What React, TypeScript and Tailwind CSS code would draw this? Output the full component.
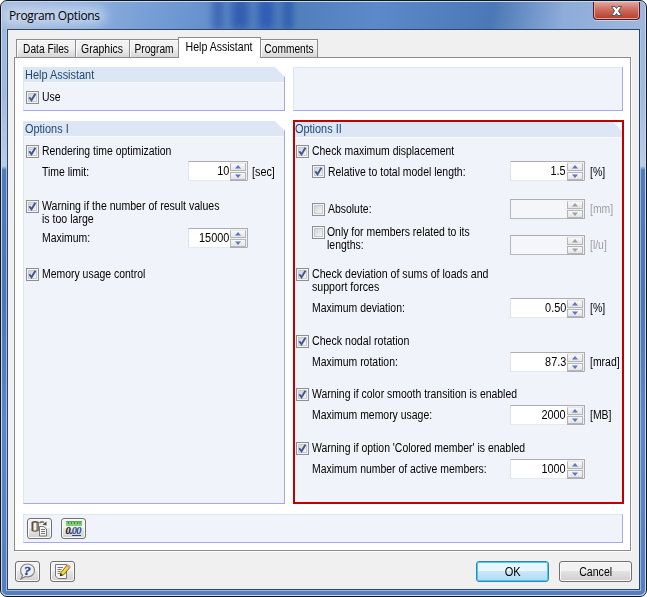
import React from 'react';
import clsx from 'clsx';

// Condensed dialog text
function T({ children, className = 'scale-x-[0.87]' }: { children: React.ReactNode; className?: string }) {
  return <span className={clsx('inline-block whitespace-nowrap', className, !className.includes('origin') && 'origin-left')}>{children}</span>;
}

function Checkbox({ checked = false }: { checked?: boolean }) {
  return (
    <span className="w-[13px] h-[13px] shrink-0 border border-[#8e8f8f] bg-[#f4f4f4] p-px flex">
      <span className="flex-1 border border-[#c6cbd1] bg-gradient-to-br from-[#cfd4da] to-[#f6f6f6] relative">
        {checked && (
          <svg className="absolute -left-px -top-px" width="9" height="9" viewBox="0 0 9 9">
            <path d="M1.3 4.3 L3.5 7.3 L7.4 0.8" fill="none" stroke="#40568f" strokeWidth="1.9" />
          </svg>
        )}
      </span>
    </span>
  );
}

function CheckRow({ lines, className, scale }: { lines: string[]; className?: string; scale?: string }) {
  return (
    <div className={clsx('flex items-start gap-[3px] leading-[13px]', className)}>
      <Checkbox checked />
      <div>
        {lines.map(line => <div key={line}><T className={scale}>{line}</T></div>)}
      </div>
    </div>
  );
}

function Spinner({ value = '', disabled = false, className }: { value?: string; disabled?: boolean; className?: string }) {
  const arrow = disabled ? '#a0a0a0' : '#5b74c4';
  return (
    <div className={clsx('h-5 shrink-0 flex border border-t-[#abadb3] border-r-[#abadb3]', disabled ? 'bg-[#f4f6fa] border-l-[#b5b7bc] border-b-[#b5b7bc]' : 'bg-white border-l-[#e2e3ea] border-b-[#e3e9ef]', className)}>
      <span className="flex-1 text-right leading-[18px] pr-px"><T className="origin-right scale-x-[0.91]">{value}</T></span>
      <span className="w-[17px] -mb-px flex flex-col border-b border-[#abadb3] bg-[#f0f0f0] pr-px pt-px">
        <span className="h-2 border border-t-[#e8e8e8] border-[#b4b6bb] bg-gradient-to-b from-[#f8f8f8] to-[#e4e4e6] flex items-center justify-center">
          <svg width="6" height="4" viewBox="0 0 6 4"><path d="M0 3.5 L3 0 L6 3.5 Z" fill={arrow} /></svg>
        </span>
        <span className="h-2 mt-px border border-[#b4b6bb] bg-gradient-to-b from-[#f8f8f8] to-[#e4e4e6] flex items-center justify-center">
          <svg width="6" height="4" viewBox="0 0 6 4"><path d="M0 0.5 L3 4 L6 0.5 Z" fill={arrow} /></svg>
        </span>
      </span>
    </div>
  );
}

interface FieldProps {
  label: string;
  value?: string;
  unit?: string;
  className?: string;
  textClass?: string;
}

function TimeField({ label, value, unit, className, textClass }: FieldProps) {
  return (
    <div className={clsx('flex items-center h-5 pl-[18px]', className)}>
      <span className={clsx('w-[146px]', textClass)}><T>{label}</T></span>
      <Spinner value={value} className="w-[60px]" />
      <span className={clsx('ml-1', textClass)}><T className="scale-x-[0.9]">{unit}</T></span>
    </div>
  );
}

function Field({ label, value, unit, className }: FieldProps) {
  return (
    <div className={clsx('flex items-center h-5 pl-[17px]', className)}>
      <span className="w-[198px] shrink-0"><T>{label}</T></span>
      <Spinner value={value} className="w-[75px]" />
      <span className="ml-[5px]"><T>{unit}</T></span>
    </div>
  );
}

function GroupTitle({ children, className = 'h-4 leading-[17px] pl-px' }: { children: string; className?: string }) {
  return (
    <div className={clsx('shrink-0 bg-[#dce6f4] text-[#1f4872] border-b border-[#f6f9fd]', className)}>
      <T className="scale-x-[0.91]">{children}</T>
    </div>
  );
}

function Group({ title, className, children }: { title: string; className?: string; children?: React.ReactNode }) {
  return (
    <section className={clsx('relative bg-[#f0f3f9] border-l border-l-[#dce6f4] border-r border-b border-r-[#a6a6ee] border-b-[#a6a6ee]', className)}>
      <GroupTitle>{title}</GroupTitle>
      {children}
      <svg className="absolute -right-px top-0" width="10" height="10" viewBox="0 0 10 10">
        <path d="M0 0 H10 V10 Z" fill="#fff" />
      </svg>
    </section>
  );
}

function IconButton({ children }: { children: React.ReactNode }) {
  return (
    <button className="w-[25px] h-[21px] rounded-[3px] border border-[#707070] bg-gradient-to-b from-[#f3f3f3] from-45% via-[#e6e6e6] via-50% to-[#d2d2d2] shadow-[inset_0_0_0_1px_#fafafa] flex items-center justify-center">
      {children}
    </button>
  );
}

function CopyIcon() {
  return (
    <svg width="17" height="17" viewBox="0 0 17 17" className="shrink-0">
      <path d="M0.5 2 Q4 0.2 7.8 2 V10.8 Q4 12.6 0.5 10.8 Z" fill="#5d4d43" />
      <path d="M2.4 2.8 H5 V10.6 H2.4 Z" fill="#f4f1ec" />
      <path d="M5 2.8 H6.5 V10.6 H5 Z" fill="#b5a99e" />
      <path d="M8.5 3 Q11 1 13 2.6" fill="none" stroke="#7a7a7a" strokeWidth="1.8" />
      <path d="M11.5 4.8 L15.5 1.5 V5.5 Z" fill="#4a4a4a" />
      <path d="M8.5 6.5 H12.5 L15.5 9 V16 H8.5 Z" fill="#f4f4f4" stroke="#777" />
      <path d="M10 9.5 H14 M10 11.5 H14 M10 13.5 H14" stroke="#777" />
    </svg>
  );
}

function UnitsIcon() {
  return (
    <svg width="18" height="17" viewBox="0 0 18 17" className="shrink-0">
      <rect x="1" y="1" width="16" height="5" fill="#7fd07c" />
      <path d="M1 1.5 H17" stroke="#5aa65a" />
      <path d="M3.5 2 V4 M6.5 2 V4 M9.5 2 V4 M12.5 2 V4 M15 2 V4" stroke="#3d8a41" />
      <text x="0.5" y="14" textLength="16" fontFamily="Liberation Serif, serif" fontSize="10.5" fontWeight="bold" fontStyle="italic" fill="#111">
        0.<tspan fill="#2a4a8c">00</tspan>
      </text>
      <path d="M7 15.5 H16" stroke="#2a4a8c" />
    </svg>
  );
}

function HelpIcon() {
  return (
    <svg width="17" height="17" viewBox="0 0 17 17" className="shrink-0">
      <path d="M8.5 1 C12.5 1 15.5 3.8 15.5 7.4 C15.5 11 12.5 13.8 8.5 13.8 C7.8 13.8 7 13.7 6.4 13.5 L2 16 L3.6 12.4 C2.3 11.2 1.6 9.4 1.6 7.4 C1.6 3.8 4.5 1 8.5 1 Z" fill="#eef0f5" stroke="#858585" strokeWidth="1.2" />
      <text x="5" y="12" fontFamily="Liberation Serif, serif" fontSize="13.5" fontWeight="bold" fontStyle="italic" fill="#2c4590" stroke="#2c4590" strokeWidth="0.4">?</text>
    </svg>
  );
}

function EditIcon() {
  return (
    <svg width="17" height="17" viewBox="0 0 17 17" className="shrink-0">
      <path d="M1.5 1.5 H12.5 V15.5 H4 L1.5 13 Z" fill="#f8f8f8" stroke="#777" />
      <path d="M3.5 4.5 H9 M3.5 6.5 H7.5 M3.5 8.5 H6.5 M3.5 10.5 H6" stroke="#777" />
      <path d="M6.2 12.8 L7 9.4 L13 2.2 L16 4.4 L9.5 12 Z" fill="#f5d928" stroke="#5a4a12" strokeWidth="0.8" />
      <path d="M12.2 3.2 L13.8 1 L16.8 3.2 L15.1 5.5 Z" fill="#e39a9a" />
      <path d="M5.8 13.2 L6.7 10.2 L8.7 12 Z" fill="#222" />
    </svg>
  );
}

function Tab({ children, className, scale = 'origin-center scale-x-[0.87]' }: { children: string; className: string; scale?: string }) {
  return (
    <div className={clsx('h-[18px] border border-b-0 border-[#898c95] bg-gradient-to-b from-[#f2f2f2] from-45% to-[#d6d6d6] shadow-[inset_1px_1px_0_#fcfcfc] flex justify-center leading-[18px]', className)}>
      <T className={scale}>{children}</T>
    </div>
  );
}

function TitleBar() {
  return (
    <header className="h-[27px] shrink-0 flex items-start justify-between pl-[7px] pr-[5px] overflow-hidden relative bg-[linear-gradient(100deg,#a3bbdd_0%,#8fb0de_12%,#6c97d2_28%,#507eba_44%,#5c89c9_58%,#4b78b6_76%,#8dacd9_87%,#9eb7de_100%)]">
      <div className="absolute left-[210px] -top-1 w-[12px] h-8 bg-[#1d4aa5]/50 blur-[3px]" />
      <div className="absolute left-[229px] -top-1 w-[18px] h-8 bg-[#1c46a8]/65 blur-[4px]" />
      <div className="absolute left-[256px] -top-1 w-[16px] h-8 bg-[#1c46b0]/65 blur-[4px]" />
      <div className="absolute left-[281px] -top-1 w-[10px] h-8 bg-[#1e4da9]/60 blur-[3px]" />
      <div className="absolute left-0 top-[5px] w-[104px] h-[17px] rounded-full bg-white/45 blur-[6px]" />
      <h1 className="relative font-['Open_Sans',sans-serif] text-[12px] leading-[27px] tracking-[-0.35px] text-black">Program Options</h1>
      <button className="relative w-[47px] h-[18px] rounded-b-[4px] border border-t-0 border-[#4d1c24] shadow-[inset_0_0_0_1px_#e9a59c,0_1px_0_#ffffff70] bg-gradient-to-b from-[#e3a59c] via-[#cc6d5f] via-45% to-[#b63a26] flex items-center justify-center">
        <svg width="11" height="10" viewBox="0 0 11 10">
          <path d="M0.5 0.5 H4 L5.5 2.5 L7 0.5 H10.5 L7.5 5 L10.5 9.5 H7 L5.5 7.5 L4 9.5 H0.5 L3.5 5 Z" fill="#fff" stroke="#535666" />
        </svg>
      </button>
    </header>
  );
}

function OptionsOne() {
  return (
    <Group title="Options I" className="w-[262px] mt-px h-[383px]">
      <CheckRow className="mt-2 ml-[2px] h-[13px]" lines={['Rendering time optimization']} />
      <TimeField className="mt-[3px]" textClass="pt-0.5" label="Time limit:" value="10" unit="[sec]" />
      <CheckRow className="mt-[19px] ml-[2px] h-[26px]" scale="scale-x-[0.88]" lines={['Warning if the number of result values', 'is too large']} />
      <TimeField className="mt-[2px]" label="Maximum:" value="15000" />
      <CheckRow className="mt-5 ml-[2px] h-[13px]" lines={['Memory usage control']} />
    </Group>
  );
}

function OptionsTwo() {
  return (
    <section className="relative w-[331px] h-[384px] border-2 border-[#c00000] bg-[#f0f3f9]">
      <GroupTitle className="h-4 leading-[15px]">Options II</GroupTitle>
      <svg className="absolute right-0 top-0" width="9" height="9" viewBox="0 0 9 9">
        <path d="M0 0 H9 V9 Z" fill="#fff" />
      </svg>
      <CheckRow className="mt-[7px] ml-px h-[13px]" lines={['Check maximum displacement']} />
      <div className="flex items-center h-5 mt-[3px] pl-[17px]">
        <span className="flex pt-px"><Checkbox checked /></span>
        <span className="ml-[3px] w-[182px] pt-0.5"><T>Relative to total model length:</T></span>
        <Spinner value="1.5" className="w-[75px]" />
        <span className="ml-[5px] pt-0.5"><T>[%]</T></span>
      </div>
      <div className="flex items-center h-5 mt-[18px] pl-[17px]">
        <Checkbox />
        <span className="ml-[3px] w-[182px]"><T>Absolute:</T></span>
        <Spinner disabled className="w-[75px]" />
        <span className="ml-[5px] text-[#a0a0a0]"><T>[mm]</T></span>
      </div>
      <div className="flex h-[29px] mt-[7px] pl-[17px]">
        <Checkbox />
        <span className="ml-[2px] w-[183px] leading-[13px]"><T>Only for members related to its<br />lengths:</T></span>
        <Spinner disabled className="w-[75px] self-end" />
        <span className="ml-[5px] self-end leading-5 text-[#a0a0a0]"><T>[l/u]</T></span>
      </div>
      <CheckRow className="mt-[13px] ml-px h-[26px]" scale="scale-x-[0.885]" lines={['Check deviation of sums of loads and', 'support forces']} />
      <Field className="mt-1" label="Maximum deviation:" value="0.50" unit="[%]" />
      <CheckRow className="mt-[17px] ml-px h-[13px]" scale="scale-x-[0.885]" lines={['Check nodal rotation']} />
      <Field className="mt-1" label="Maximum rotation:" value="87.3" unit="[mrad]" />
      <CheckRow className="mt-4 ml-px h-[13px]" lines={['Warning if color smooth transition is enabled']} />
      <Field className="mt-1" label="Maximum memory usage:" value="2000" unit="[MB]" />
      <CheckRow className="mt-[17px] ml-px h-[13px]" lines={["Warning if option 'Colored member' is enabled"]} />
      <Field className="mt-1" label="Maximum number of active members:" value="1000" />
    </section>
  );
}

export default function App() {
  return (
    <div className="w-[647px] h-[597px] bg-white overflow-hidden">
      <div className="w-full h-full rounded-[7px] border border-[#10151f] bg-[#c8d9ef] p-px overflow-hidden">
        <div className="w-full h-full rounded-[5px] overflow-hidden flex flex-col bg-[linear-gradient(to_bottom,#9cb6dd_0px,#9fb9df_90px,#b9cdea_164px,#4f7cbc_168px,#4b77b7_300px,#5b88c8_420px,#5480c0_100%)]">
          <TitleBar />
          <div className="mx-[5px] h-[561px] border border-[#2f4566] outline outline-[#b6cfec]/70 bg-[#f0f0f0] font-['Liberation_Sans',sans-serif] text-[12px] text-black flex flex-col pl-[6px] pr-[8px]">

            {/* Tabs */}
            <div className="flex items-end h-[20px] mt-[7px] pl-[2px] shrink-0">
              <Tab className="w-[60px]" scale="origin-center scale-x-[0.85]">Data Files</Tab>
              <Tab className="w-[55px] -ml-px">Graphics</Tab>
              <Tab className="w-[50px] -ml-px" scale="origin-center scale-x-[0.85]">Program</Tab>
              <div className="relative w-[83px] h-[21px] -mb-px -ml-px border border-b-0 border-[#898c95] bg-white flex justify-center leading-[19px]">
                <T className="origin-center scale-x-[0.88]">Help Assistant</T>
              </div>
              <Tab className="w-[58px] -ml-px" scale="origin-center scale-x-[0.85]">Comments</Tab>
            </div>

            {/* Tab page */}
            <div className="h-[494px] shrink-0 border border-[#898c95] bg-white pt-[9px] pl-2 shadow-[1px_1px_0_#fff]">
              <div className="flex gap-2">
                <Group title="Help Assistant" className="w-[262px] h-[44px]">
                  <CheckRow className="mt-2 ml-[2px] h-[13px]" lines={['Use']} />
                </Group>
                <div className="w-[330px] h-[44px] bg-[#f0f3f9] border border-t-[#dce6f4] border-l-[#dce6f4] border-r-[#a6a6ee] border-b-[#a6a6ee]" />
              </div>
              <div className="flex gap-2 mt-[9px]">
                <OptionsOne />
                <OptionsTwo />
              </div>
              <div className="w-[600px] h-[29px] mt-[10px] bg-[#f0f3f9] border border-t-[#dce6f4] border-l-[#dce6f4] border-r-[#a6a6ee] border-b-[#a6a6ee] flex items-center gap-[9px] pl-[3px]">
                <IconButton><CopyIcon /></IconButton>
                <IconButton><UnitsIcon /></IconButton>
              </div>
            </div>

            {/* Dialog buttons */}
            <div className="flex items-center mt-[10px] pl-px">
              <IconButton><HelpIcon /></IconButton>
              <span className="w-[10px]" />
              <IconButton><EditIcon /></IconButton>
              <button className="ml-auto w-[73px] h-[21px] rounded-[3px] border border-[#3c7fb1] bg-gradient-to-b from-[#eaf6fd] from-45% via-[#cbe8f9] via-50% to-[#a9dbf5] shadow-[inset_0_0_0_1px_#3fd0f8]">
                <T className="origin-center scale-x-[0.92]">OK</T>
              </button>
              <button className="ml-[10px] -mr-px w-[73px] h-[21px] rounded-[3px] border border-[#707070] bg-gradient-to-b from-[#f2f2f2] from-45% via-[#e2e2e2] via-50% to-[#cfcfcf] shadow-[inset_0_0_0_1px_#fafafa]">
                <T className="origin-center scale-x-[0.88]">Cancel</T>
              </button>
            </div>
          </div>
        </div>
      </div>
    </div>
  );
}
